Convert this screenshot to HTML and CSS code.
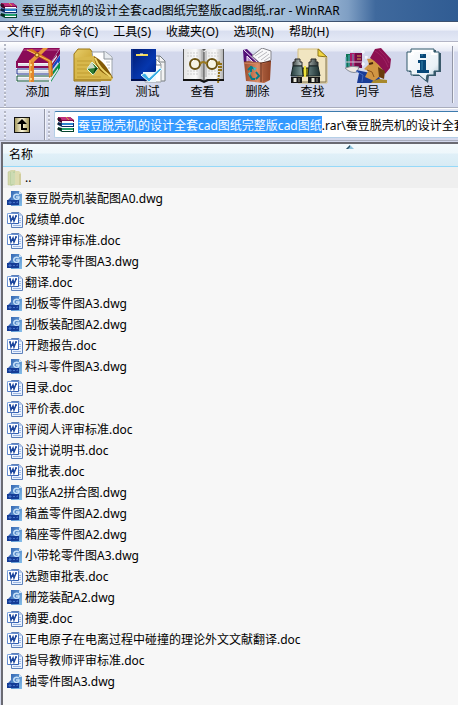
FILE: index.html
```html
<!DOCTYPE html>
<html lang="zh-CN">
<head>
    <meta charset="UTF-8">
    <meta name="viewport" content="width=device-width, initial-scale=1.0">
    <title>蚕豆脱壳机的设计全套cad图纸完整版cad图纸.rar - WinRAR</title>
    <link rel="stylesheet" href="styles.css">
</head>
<body>
    <!-- small icons shared by the title, the address box and the list -->
    <svg class="sprite" aria-hidden="true">
        <defs>
            <linearGradient id="docBlue" x1="0" y1="0" x2="1" y2="1">
                <stop offset="0" stop-color="#86aae2"/><stop offset="1" stop-color="#2c58ac"/>
            </linearGradient>
            <linearGradient id="dwgBlue" x1="0" y1="0" x2="1" y2="1">
                <stop offset="0" stop-color="#3568b4"/><stop offset="1" stop-color="#86bfea"/>
            </linearGradient>
            <linearGradient id="folderTan" x1="0" y1="0" x2="1" y2="0">
                <stop offset="0" stop-color="#cfd5a8"/><stop offset="1" stop-color="#e6e2ba"/>
            </linearGradient>
            <linearGradient id="gold" x1="0" y1="0" x2="1" y2="1">
                <stop offset="0" stop-color="#e8cf6c"/><stop offset="0.6" stop-color="#c79f2b"/><stop offset="1" stop-color="#8a6408"/>
            </linearGradient>
            <linearGradient id="upGold" x1="0" y1="0" x2="1" y2="0">
                <stop offset="0" stop-color="#a79c63"/><stop offset="0.5" stop-color="#fffbe0"/><stop offset="1" stop-color="#a2965a"/>
            </linearGradient>
            <linearGradient id="bookBlue" x1="0" y1="0" x2="1" y2="1">
                <stop offset="0" stop-color="#001a70"/><stop offset="0.6" stop-color="#0637ae"/><stop offset="1" stop-color="#002080"/>
            </linearGradient>
            <linearGradient id="copper" x1="0" y1="0" x2="1" y2="0">
                <stop offset="0" stop-color="#9c4c2c"/><stop offset="0.5" stop-color="#da8b66"/><stop offset="1" stop-color="#8f3f20"/>
            </linearGradient>
            <linearGradient id="steel" x1="0" y1="0" x2="1" y2="0">
                <stop offset="0" stop-color="#3b4544"/><stop offset="0.4" stop-color="#e4ecea"/><stop offset="1" stop-color="#2e3938"/>
            </linearGradient>
            <linearGradient id="barrel" x1="0" y1="0" x2="1" y2="0">
                <stop offset="0" stop-color="#233a3b"/><stop offset="0.4" stop-color="#839e9d"/><stop offset="1" stop-color="#1b2e2f"/>
            </linearGradient>
            <linearGradient id="page" x1="0" y1="0" x2="1" y2="0">
                <stop offset="0" stop-color="#e6e6e6"/><stop offset="0.6" stop-color="#fafafa"/><stop offset="1" stop-color="#b5b5b5"/>
            </linearGradient>
            <linearGradient id="bubble" x1="0" y1="0" x2="1" y2="1">
                <stop offset="0" stop-color="#ffffff"/><stop offset="0.7" stop-color="#e8f1f7"/><stop offset="1" stop-color="#9fb8c6"/>
            </linearGradient>
        </defs>
        <symbol id="icon-rar" viewBox="0 0 17 17">
            <path d="M1 1H13L17 4V6H5L1 4Z" fill="#7a0a45"/><path d="M2 1H13L16 4H5Z" fill="#c0307c"/>
            <path d="M1 3L5 5V7L1 5Z" fill="#3b0724"/><path d="M5 5H16V6H5Z" fill="#fff"/>
            <path d="M1 6L5 7H17V11H5L1 9Z" fill="#0c2f6a"/><path d="M5 7H16V9H5Z" fill="#2f86cf"/><path d="M5 9H16V10H5Z" fill="#fff"/>
            <path d="M1 11L5 12H17V16H5L1 14Z" fill="#04452d"/><path d="M5 12H16V14H5Z" fill="#22a26a"/><path d="M5 14H16V15H5Z" fill="#fff"/>
            <path d="M0 3H4M0 8H4M0 13H4" stroke="#111"/><path d="M9 1L12 4" stroke="#d8a33b" fill="none"/>
        </symbol>
        <symbol id="icon-doc" viewBox="0 0 16 16">
            <path d="M4.500.500H12L15.500 4V15.500H4.500Z" fill="#eaf2ff" stroke="#5d80ba"/>
            <path d="M12 1V4H15Z" fill="#b5cdf1"/>
            <path d="M12 6.500H14M12 8.500H14M12 10.500H14M6 13.500H14" stroke="#9db7e2"/>
            <path d="M.500 1.500H11.500V11.500H.500Z" fill="#fff" stroke="url(#docBlue)"/>
            <path d="M2 4H4M3 4L4 9L6 5L7 9L9 4M8 4H10" fill="none" stroke="#1c469d" stroke-width="1.500"/>
        </symbol>
        <symbol id="icon-dwg" viewBox="0 0 16 16">
            <path d="M4 0H12L15 3V15H4Z" fill="url(#dwgBlue)"/><path d="M12 0V3H15Z" fill="#d0e6fa"/>
            <path d="M12 4C9 2 6 4 7 7C8 9 12 9 12 6H9" fill="none" stroke="#c6e0f8" stroke-width="1.500"/>
            <path d="M0 9H12V14H0Z" fill="#143c96"/><path d="M1 9L4 6V9Z" fill="#3c67b8"/>
            <path d="M2 11H4V12H2ZM6 11L7 12L8 11M10 12V11H11" fill="none" stroke="#4a76cc"/>
        </symbol>
        <symbol id="icon-folder" viewBox="0 0 16 16">
            <path d="M1 2L5 0H8V15H1Z" fill="url(#folderTan)" stroke="#bcc391" stroke-width=".5"/>
            <path d="M6 1H12L14 3V15H6Z" fill="#dedcb2"/><path d="M3 2L8 1V14L4 16L3 15Z" fill="#bdd1a4"/>
            <path d="M5 2V14M7 3V14" stroke="#dbe3c0"/><path d="M13 4V15" stroke="#c4be87"/>
        </symbol>
        <symbol id="icon-up" viewBox="0 0 16 16">
            <path d="M0 0H16V16H0Z" fill="#111"/><path d="M1 1H15V15H1Z" fill="url(#upGold)"/>
            <path d="M8 2L13 7H9V11H13V13H7V7H3Z" fill="#000"/>
        </symbol>
    </svg>

    <header class="titlebar">
        <svg class="title-icon" aria-hidden="true"><use href="#icon-rar"/></svg>
        <h1>蚕豆脱壳机的设计全套cad图纸完整版cad图纸.rar - WinRAR</h1>
    </header>

    <nav class="menubar" aria-label="菜单">
        <button type="button">文件(F)</button>
        <button type="button">命令(C)</button>
        <button type="button">工具(S)</button>
        <button type="button">收藏夹(O)</button>
        <button type="button">选项(N)</button>
        <button type="button">帮助(H)</button>
    </nav>

    <div class="toolbar" role="toolbar" aria-label="工具">
        <span class="grip"></span>
        <button type="button">
            <svg viewBox="0 0 46 36" aria-hidden="true">
                <path d="M1 14H36V34H1Z" fill="#f6f6f8"/>
                <path d="M36 14L45 1V6L36 20Z" fill="#80064f"/><path d="M36 20L45 7V13L36 26Z" fill="#1544c4"/><path d="M36 26L45 14V20L36 34Z" fill="#079046"/>
                <path d="M33 18L42 7V9L34 20M34 26L43 14V16L34 28M34 32L43 20V22L35 34" fill="#dfe2ef"/>
                <path d="M9 0H45L36 14H1Z" fill="#8a0b57"/><path d="M9 1H44L43 3H8Z" fill="#a62d74"/>
                <path d="M35 14H2V19H34" fill="none" stroke="#8a0b57" stroke-width="2"/>
                <path d="M35 21H2V26H34" fill="none" stroke="#1b2d8e" stroke-width="1"/>
                <path d="M35 28H2V33H34" fill="none" stroke="#0a5034" stroke-width="1"/>
                <path d="M3 17H34M3 24H34M3 31H34" stroke="#c6c9d8"/>
                <path d="M14 12H19V34H14Z" fill="#e2872a"/><path d="M14 13L28 0H33L19 14Z" fill="#e9973b"/>
                <path d="M12 2L17 1L37 13L38 27L34 30L33 14Z" fill="#d77717"/><path d="M12 2L35 13V28" fill="none" stroke="#f6bd68"/>
                <path d="M15 13V34" stroke="#ffc36b"/><circle cx="22" cy="7" r="2" fill="#ffd86b" stroke="#8a4b08"/>
                <circle cx="16" cy="17" r="1" fill="#fff1a0"/><circle cx="16" cy="24" r="1" fill="#fff1a0"/><circle cx="16" cy="31" r="1" fill="#fff1a0"/>
            </svg>
            <span>添加</span>
        </button>
        <button type="button">
            <svg viewBox="0 0 46 36" aria-hidden="true">
                <path d="M4 6L8 1H20L23 5H31V33H4Z" fill="url(#gold)" stroke="#9b7613"/>
                <path d="M22 4H36L42 9V30H27Z" fill="#fff" stroke="#9da4ac"/><path d="M34 3V11H43" fill="#e7ebef" stroke="#8e959b"/>
                <path d="M36 14H40M37 17H40M38 20H40" stroke="#c3c7cb"/>
                <path d="M5 10L24 8C27 16 33 22 43 30L41 33H5Z" fill="#d8b84c"/><path d="M24 8C25 21 33 26 43 30C37 19 33 13 24 8Z" fill="#845a06"/>
                <path d="M25 10C29 20 35 24 41 29" fill="none" stroke="#efd76e" stroke-width="2"/>
                <path d="M7 13H22M7 17H20M7 21H19M7 25H21M7 29H31" stroke="#c09c31"/><path d="M5 32H41" stroke="#8f6810"/>
                <path d="M22 14L28 20L23 27L17 21Z" fill="#307e32" stroke="#e9ffe2"/><path d="M22 14L25 20L17 21Z" fill="#cbd8c6"/><path d="M23 27L25 20L28 20Z" fill="#073e10"/>
            </svg>
            <span>解压到</span>
        </button>
        <button type="button">
            <svg viewBox="0 0 46 36" aria-hidden="true">
                <path d="M24 8H35L40 13V33H24Z" fill="#f3f3f3" stroke="#767d80"/><path d="M22 11H31L36 16V34H20V12Z" fill="#fff" stroke="#9aa0a3"/>
                <path d="M34 8V14H40M31 11V17H36" fill="none" stroke="#7f8588"/>
                <path d="M6 1H31V32H6Z" fill="url(#bookBlue)"/><path d="M7 1V31" stroke="#1e46a4"/><path d="M6 32H31" stroke="#00104d" stroke-width="2"/>
                <path d="M11 7H23" stroke="#f3d958" stroke-width="2"/><path d="M15 6H18" stroke="#fffcd7"/>
                <path d="M18 28L25 34H31V24H18Z" fill="#eef7fc"/>
                <path d="M16 27L20 25L24 30L35 20L37 21L24 34Z" fill="#38aee7" stroke="#e7fbff"/>
            </svg>
            <span>测试</span>
        </button>
        <button type="button">
            <svg viewBox="0 0 46 36" aria-hidden="true">
                <path d="M3 1H44V33H3Z" fill="#555"/><path d="M4 1H22L24 3V32L20 31H4Z" fill="url(#page)"/><path d="M24 3L26 1H43V31H27L24 32Z" fill="url(#page)"/>
                <path d="M7 5H18M7 8H19M7 23H19M7 26H18M28 5H40M28 8H40M28 23H38M28 26H37" stroke="#ccc" stroke-dasharray="2 1"/>
                <path d="M22 2V29M26 3V29" stroke="#a8a8a8"/><path d="M24 4V32" stroke="#393939"/>
                <path d="M3 32L20 32L24 34L28 32L44 32" fill="none" stroke="#111" stroke-width="2"/>
                <g fill="#f6f4e4" stroke="#6b5312" stroke-width="2"><circle cx="15" cy="16" r="5"/><circle cx="32" cy="16" r="5"/></g>
                <path d="M20 16Q23 12 27 16M37 15L40 14" fill="none" stroke="#9c7a20" stroke-width="2"/>
                <path d="M39 15V25L38 35M41 15V24" stroke="#927014" stroke-width="2" stroke-dasharray="2 1" fill="none"/>
                <path d="M12 14L14 12M29 14L31 12" stroke="#fff"/>
            </svg>
            <span>查看</span>
        </button>
        <button type="button">
            <svg viewBox="0 0 46 36" aria-hidden="true">
                <path d="M8 2L12 1L27 16H9Z" fill="#521078"/><path d="M9 2L23 15M12 8L18 14H12Z" fill="#b68dcb" stroke="#f1e6f8"/>
                <path d="M17 8L27 0L36 3L36 12L26 16Z" fill="#f8f8f9" stroke="#85858c"/><path d="M20 8L28 3M23 10L32 4M26 12L34 6M29 13L35 9" stroke="#b7b7bd"/>
                <path d="M9 14L14 13L28 15L36 13L35 32L29 35L11 33Z" fill="url(#copper)"/>
                <path d="M9 14L26 15V34M26 15L36 13" fill="none" stroke="#5d2a18"/><path d="M9 15H25" stroke="#e79a76"/>
                <path d="M27 16L35 15L34 31L28 34Z" fill="#8d452a" opacity=".5"/>
                <g fill="none" stroke="#077c88" stroke-width="2"><path d="M13 22L16 19L20 21M16 18V24M14 26L17 31H20M21 24L24 28L21 31"/></g>
                <path d="M18 19L22 20L19 23ZM13 25L16 24L15 28Z" fill="#45bbc0"/>
            </svg>
            <span>删除</span>
        </button>
        <button type="button">
            <svg viewBox="0 0 46 36" aria-hidden="true">
                <path d="M8 1H29L37 9V35H8Z" fill="#f1e5c1" stroke="#d4be82"/><path d="M36 10V34H9" fill="none" stroke="#80734e"/><path d="M28 1L37 9L28 8Z" fill="#f1d641" stroke="#8d7618"/>
                <path d="M5 11H10V14H12V18H3V14H5ZM21 11H26V14H28V18H19V14H21Z" fill="url(#steel)" stroke="#292929"/>
                <path d="M12 20H19V28H12Z" fill="#817b16" stroke="#28270b"/><path d="M15 18V29" stroke="#eee43d" stroke-width="2"/>
                <path d="M3 18H12L13 28H1ZM19 18H28L30 28H18Z" fill="url(#barrel)" stroke="#172526"/>
                <path d="M1 29H12V35H1ZM18 29H30V35H18Z" fill="#151515"/><path d="M5 30V34M23 30V34" stroke="#e8e8da" stroke-width="3"/><path d="M9 30V34M27 30V34" stroke="#8f8f86" stroke-width="1"/>
            </svg>
            <span>查找</span>
        </button>
        <button type="button">
            <svg viewBox="0 0 46 36" aria-hidden="true">
                <path d="M1 6H5V21H1Z" fill="#0c7455"/><path d="M5 5H10V20H5Z" fill="#a91967"/><path d="M10 5H17V20H10Z" fill="#730b48"/>
                <path d="M1 9V19M4 7V18M8 6V18" stroke="#5daabd"/><path d="M12 8H16M12 11H16" stroke="#daa44f"/>
                <path d="M1 14H17" stroke="#e5c5d7"/><path d="M0 20Q7 17 14 19L12 24Q6 26 0 20Z" fill="#efe8e2" stroke="#868d99"/>
                <path d="M11 22L14 25L12 35H36L34 28L21 24Z" fill="#193b96"/><path d="M11 23L18 27L17 34" stroke="#446ac0" fill="none"/>
                <path d="M22 11L32 10L37 18L35 28L29 33L20 29L23 23L19 21L24 16Z" fill="#d19643"/>
                <path d="M24 16L28 15" stroke="#4b260c" stroke-width="2"/><path d="M22 22L27 24L29 29" fill="none" stroke="#8a5218"/>
                <path d="M25 10L30 1L36 0L46 11L45 20L40 26Q35 16 25 10Z" fill="#8c1151"/><path d="M30 3Q39 8 43 19M34 2Q42 8 44 15" fill="none" stroke="#9f2463"/>
                <path d="M33 19L40 23L39 31L34 29Z" fill="#6a3d0c"/><path d="M28 33L34 31L42 32V35H26Z" fill="#a8892c"/>
                <path d="M18 2V6M16 4H20M18 14V18M16 16H20M21 8V11M20 9H23M7 2V4" stroke="#fff"/>
            </svg>
            <span>向导</span>
        </button>
        <button type="button">
            <svg viewBox="0 0 46 36" aria-hidden="true">
                <path d="M9 5H13V2H36V5H41V24H36V28H29L28 35L20 28H13V24H9Z" fill="#204455" opacity=".85"/>
                <path d="M7 4H11V1H34V4H39V23H34V27H27L26 33L19 27H11V23H7Z" fill="url(#bubble)" stroke="#31596a"/>
                <path d="M9 6H13V3H32V6H37" fill="none" stroke="#fff" stroke-width="2"/>
                <path d="M20 6H26V10H20ZM18 12H26V22H29V25H17V22H20V15H18Z" fill="#074878"/>
                <path d="M21 7H23M22 13V22" stroke="#3784ac"/>
            </svg>
            <span>信息</span>
        </button>
        <span class="separator"></span>
    </div>

    <div class="addressbar">
        <span class="grip"></span>
        <button type="button" class="up" aria-label="向上"><svg aria-hidden="true"><use href="#icon-up"/></svg></button>
        <span class="separator"></span>
        <span class="grip"></span>
        <label class="path">
            <svg aria-hidden="true"><use href="#icon-rar"/></svg>
            <input type="text" id="path" aria-label="路径" spellcheck="false" value="蚕豆脱壳机的设计全套cad图纸完整版cad图纸.rar\蚕豆脱壳机的设计全套cad图纸完整版cad图纸">
        </label>
    </div>

    <main class="files">
        <table>
            <thead>
                <tr><th scope="col" aria-sort="ascending">名称<svg class="sort" viewBox="0 0 8 4" aria-hidden="true"><path d="M0 4L4 0L8 4Z" fill="#8fc3dc"/><path d="M0 4L4 0V2L2 4Z" fill="#2d5065"/></svg></th></tr>
            </thead>
            <tbody id="file-list">
                <tr class="current"><td><svg aria-hidden="true"><use href="#icon-folder"/></svg>..</td></tr>
            </tbody>
        </table>
    </main>

    <script>
        const files = [
            "蚕豆脱壳机装配图A0.dwg",
            "成绩单.doc",
            "答辩评审标准.doc",
            "大带轮零件图A3.dwg",
            "翻译.doc",
            "刮板零件图A3.dwg",
            "刮板装配图A2.dwg",
            "开题报告.doc",
            "料斗零件图A3.dwg",
            "目录.doc",
            "评价表.doc",
            "评阅人评审标准.doc",
            "设计说明书.doc",
            "审批表.doc",
            "四张A2拼合图.dwg",
            "箱盖零件图A2.dwg",
            "箱座零件图A2.dwg",
            "小带轮零件图A3.dwg",
            "选题审批表.doc",
            "栅笼装配A2.dwg",
            "摘要.doc",
            "正电原子在电离过程中碰撞的理论外文文献翻译.doc",
            "指导教师评审标准.doc",
            "轴零件图A3.dwg"
        ];

        const list = document.getElementById('file-list');
        files.forEach(name => {
            const type = name.split('.').pop();
            const row = document.createElement('tr');
            row.innerHTML = `<td><svg aria-hidden="true"><use href="#icon-${type}"/></svg>${name}</td>`;
            list.appendChild(row);
        });

        // select the archive name without its extension
        const path = document.getElementById('path');
        path.focus();
        path.setSelectionRange(0, path.value.indexOf('.rar'));
    </script>
</body>
</html>
```

FILE: styles.css
```css
* {
    box-sizing: border-box;
}
body {
    display: flex;
    flex-direction: column;
    min-height: 100vh;
    margin: 0;
    overflow-x: hidden;
    font-family: "Noto Sans", "Noto Sans CJK SC", sans-serif;
    font-size: 12px;
    line-height: 16px;
    color: #000;
    background: #d3d8ec;
}
button, input {
    font: inherit;
    color: inherit;
}
button {
    padding: 0;
    border: none;
    background: none;
    white-space: nowrap;
}
svg {
    display: block;
    flex: none;
}
.sprite {
    position: absolute;
    width: 0;
    height: 0;
}
.titlebar {
    display: flex;
    align-items: center;
    gap: 5px;
    height: 22px;
    border-bottom: 1px solid #3d5270;
    background: linear-gradient(90deg, #8fabcb 0%, #b4cbe2 10%, #b7cee4 45%, #9ab6d4 70%, #7f9fc4 76%, #3f699d 82%, #305c93 100%);
}
.title-icon {
    width: 17px;
    height: 17px;
}
.titlebar h1 {
    margin: 0;
    font-size: 12px;
    font-weight: normal;
    white-space: nowrap;
}
.menubar {
    display: flex;
    align-items: center;
    gap: 15px;
    height: 20px;
    padding-left: 7px;
    border-bottom: 1px solid #b3b5c6;
    background: linear-gradient(#ffffff, #f0f3fa 40%, #d9dff0 50%, #e4e9f6);
}
.toolbar {
    display: flex;
    height: 66px;
    padding-left: 4px;
    border-bottom: 1px solid #a9adbd;
    background: linear-gradient(#ffffff, #e6e9f5 9px, #d3d8ec 10px);
}
.toolbar button {
    display: flex;
    flex: none;
    flex-direction: column;
    align-items: center;
    width: 55px;
    padding-top: 6px;
}
.toolbar svg {
    width: 46px;
    height: 36px;
}
.toolbar .separator {
    margin: 4px 0 4px 2px;
}
.grip {
    flex: none;
    width: 2px;
    margin: 2px 4px 0 0;
    background: repeating-linear-gradient(#b4b7c4 0 2px, #f3f5fb 2px 3px, transparent 3px 4px);
}
.separator {
    flex: none;
    width: 2px;
    border-left: 1px solid #9296a6;
    border-right: 1px solid #f1f3fa;
}
.addressbar {
    display: flex;
    height: 33px;
    padding-left: 4px;
    border-top: 1px solid #fff;
    border-bottom: 1px solid #a9adbd;
    background: linear-gradient(#e1e5f4, #d3d8ec);
}
.up {
    width: 34px;
    padding: 0 4px;
}
.up svg {
    width: 16px;
    height: 16px;
}
.addressbar .grip {
    margin-right: 4px;
}
.addressbar .separator + .grip {
    margin-left: 2px;
}
.path {
    display: flex;
    flex: 1;
    align-items: center;
    gap: 4px;
    min-width: 0;
    margin: 2px 0;
    padding-left: 2px;
    border: 1px solid #b5cfe7;
    border-top-color: #3d7bad;
    border-right: none;
    border-radius: 2px 0 0 2px;
    background: #fff;
}
.path svg {
    width: 17px;
    height: 17px;
}
.path input {
    flex: 1;
    min-width: 0;
    height: 17px;
    padding: 0;
    border: none;
    outline: none;
    background: none;
}
.path input::selection {
    color: #fff;
    background: #3399ff;
}
.files {
    flex: 1;
    margin: 1px 0 0 1px;
    border: solid #6a6a72;
    border-width: 2px 0 0 2px;
    background: #f7f7f7;
}
table {
    width: 100%;
    border-collapse: separate;
    border-spacing: 0;
}
th, td {
    padding: 0;
    text-align: left;
    font-weight: normal;
    white-space: nowrap;
}
th {
    position: relative;
    height: 23px;
    padding-left: 6px;
    border-bottom: 1px solid #96d9f9;
    background: linear-gradient(#f4fafd, #eef7fb 9px, #e0f0f8 10px, #d8ebf4);
}
.sort {
    position: absolute;
    top: 1px;
    right: 104px;
    width: 8px;
    height: 4px;
}
td {
    display: flex;
    align-items: center;
    gap: 2px;
    height: 21px;
    padding-left: 4px;
}
td svg {
    width: 16px;
    height: 16px;
}
.current td {
    background: #efefef;
}
```
